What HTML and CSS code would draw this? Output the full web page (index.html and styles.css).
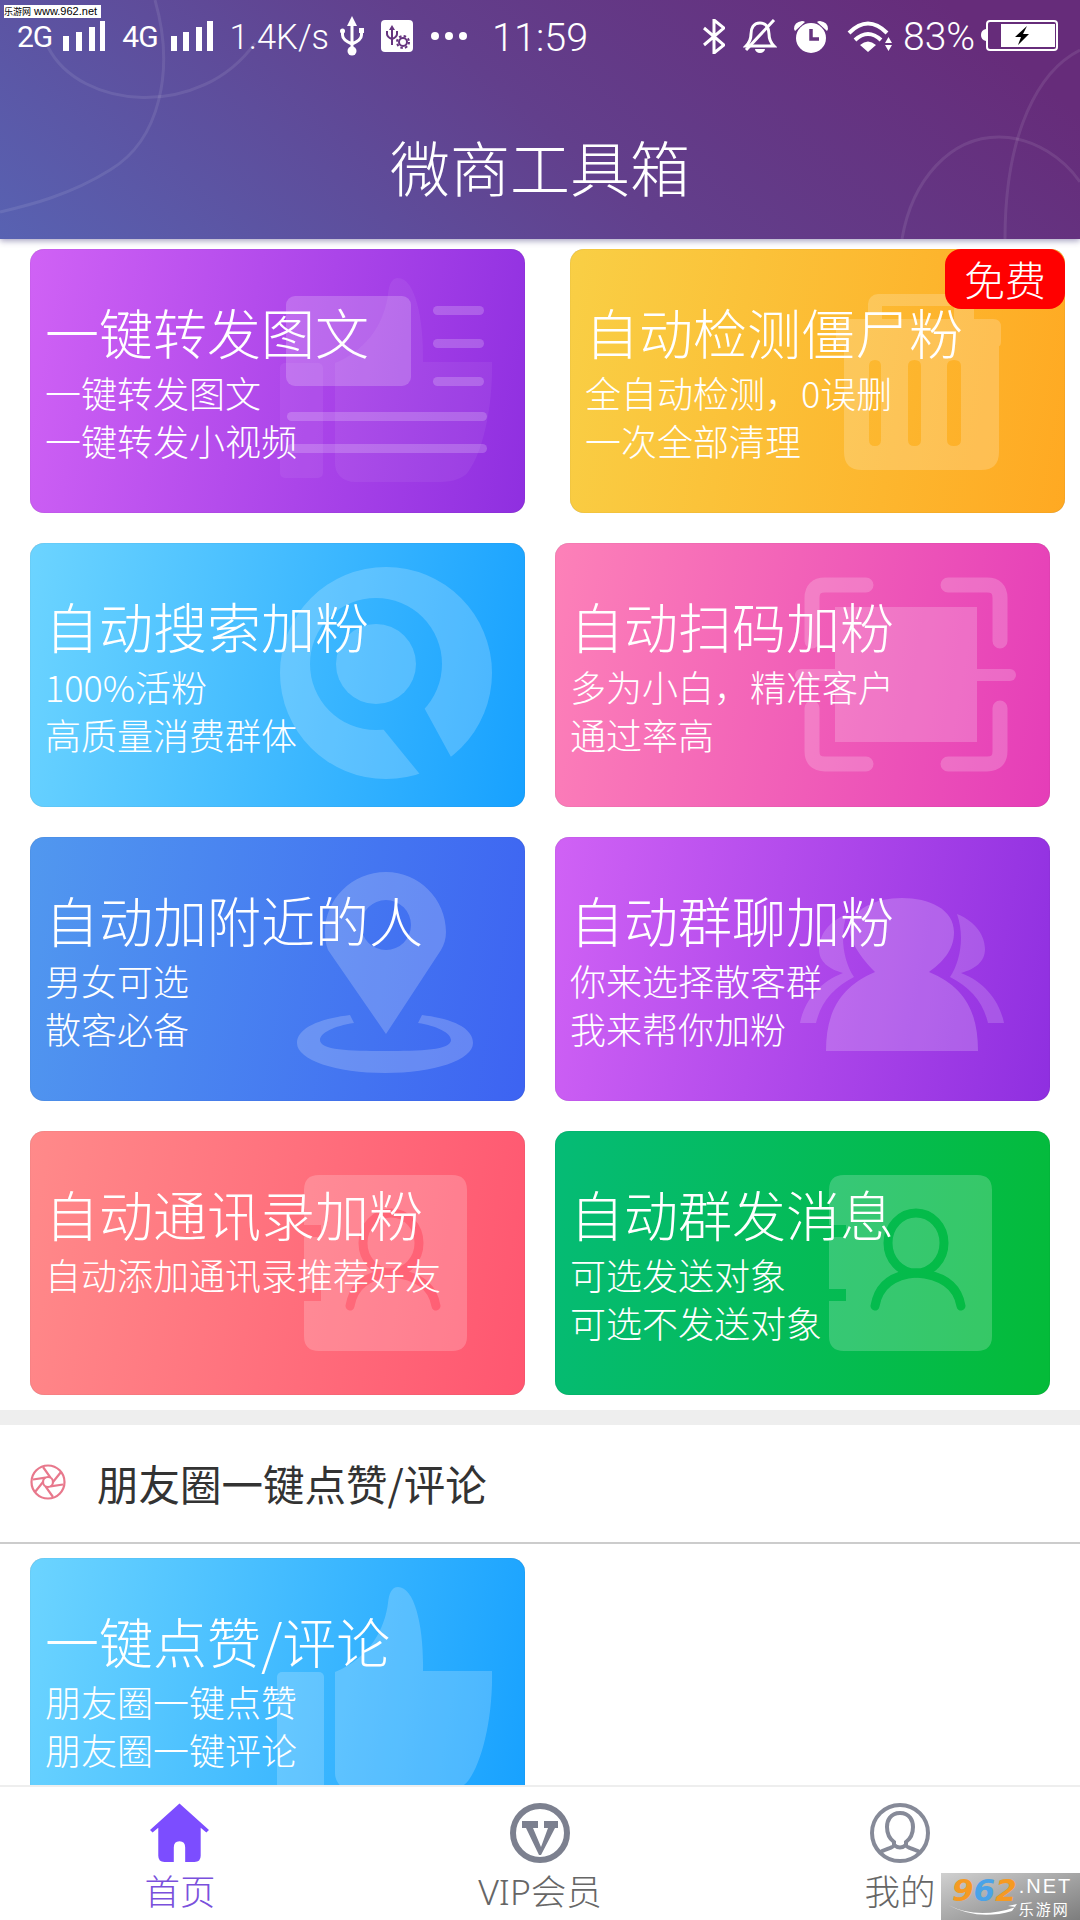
FILE: index.html
```html
<!DOCTYPE html>
<html lang="zh">
    <head>
        <meta charset="UTF-8">
        <meta name="viewport" content="width=device-width, initial-scale=1.0">
        <title>微商工具箱</title>
        <link rel="stylesheet" href="styles.css">
    </head>
    <body>
        <div class="page">

            <header class="header">
                <svg class="header-lines" viewBox="0 0 1080 239">
                    <path d="M48 47 C80 110 200 120 255 43"/>
                    <path d="M155 0 C175 70 160 140 110 170 C70 195 30 205 0 212"/>
                    <path d="M1080 50 C1040 70 1005 130 1005 239"/>
                    <path d="M902 239 C912 180 950 137 999 137 C1035 137 1065 160 1080 182"/>
                </svg>
                <div class="status-bar">
                    <span class="st-2g">2G</span>
                    <svg class="st-signal" viewBox="0 0 42 30"><path d="M0 15h6v15H0zM13 11h6v19h-6zM26 6h6v24h-6zM37 0h5v30h-5z"/></svg>
                    <span class="st-4g">4G</span>
                    <svg class="st-signal st-signal2" viewBox="0 0 42 30"><path d="M0 15h6v15H0zM12 11h6v19h-6zM25 6h6v24h-6zM36 0h6v30h-6z"/></svg>
                    <span class="st-speed">1.4K/s</span>
                    <svg class="st-usb" viewBox="0 0 24 40">
                        <path d="M12 0l5 10H7z"/>
                        <circle cx="12" cy="35" r="4.5"/>
                        <circle cx="2.5" cy="15" r="2.5"/>
                        <rect x="19" y="12" width="5" height="5"/>
                        <path class="st-line" d="M12 8v26M2.500 15v4q0 5 9.500 9M21.500 15v4q0 5-9.500 9"/>
                    </svg>
                    <svg class="st-debug" viewBox="0 0 32 32">
                        <rect width="32" height="32" rx="4"/>
                        <path class="st-glyph" d="M11 5l3 5H8z"/>
                        <path class="st-glyph-line" d="M11 8v17M6 11v3q0 3 5 5M16 11v3q0 3-5 5"/>
                        <circle class="st-gear" cx="22" cy="22" r="4"/>
                        <circle class="st-gear-teeth" cx="22" cy="22" r="6"/>
                    </svg>
                    <div class="st-dots"><i></i><i></i><i></i></div>
                    <span class="st-time">11:59</span>

                    <svg class="st-bt" viewBox="0 0 22 35"><path d="M1 9l20 17-10 8V1l10 8L1 26"/></svg>
                    <svg class="st-bell" viewBox="0 0 34 34">
                        <path class="st-line" d="M17 4C10 4 8 10 8 15c0 6-2 9-5 12h28c-3-3-5-6-5-12 0-5-2-11-9-11z"/>
                        <path d="M12 30h10a5 4 0 0 1-10 0z"/>
                        <path class="st-line" d="M3 31L31 1"/>
                    </svg>
                    <svg class="st-alarm" viewBox="0 0 36 33">
                        <circle cx="18" cy="18" r="15"/>
                        <path d="M1 9q0-7 8-8 2 0 3 1L2 11z M35 9q0-7-8-8-2 0-3 1l10 9z"/>
                        <path class="st-hand" d="M18 9v10h8"/>
                    </svg>
                    <svg class="st-wifi" viewBox="0 0 45 32">
                        <path class="st-line st-wifi-arc" d="M2 13Q21-6 40 13M8 20q13-12 26 0"/>
                        <path d="M13 25q8-7 16 0l-8 7zM41.500 17l3.500 6h-7zM38 25h7l-3.500 6z"/>
                    </svg>
                    <span class="st-batt-text">83%</span>
                    <svg class="st-battery" viewBox="0 0 78 32">
                        <path d="M5 9v12q-5-1-5-6t5-6z"/>
                        <rect class="st-line st-batt-body" x="6" y="1" width="70" height="29" rx="3"/>
                        <rect x="20" y="4" width="54" height="23"/>
                        <path class="st-bolt" d="M46 6L34 17h6l-3 8 11-11h-6l4-8z"/>
                    </svg>
                </div>
                <h1 class="header-title">微商工具箱</h1>
            </header>

            <main class="content">
                <div class="grid">

                    <div class="card purple">
                        <svg class="art" viewBox="0 0 495 264">
                            <g class="faint">
                                <path d="M305 114C340 100 355 70 358 45c1-10 4-16 10-16 17 0 26 41 25 84h69c1 47-10 92-24 110-4 6-15 10-28 10H325c-12 0-20-8-20-18z"/>
                                <rect x="250" y="114" width="43" height="115" rx="5"/>
                            </g>
                            <rect x="256" y="47" width="125" height="90" rx="9"/>
                            <rect x="403" y="57" width="51" height="9" rx="4.500"/>
                            <rect x="403" y="90" width="51" height="9" rx="4.500"/>
                            <rect x="403" y="128" width="51" height="9" rx="4.500"/>
                            <rect x="257" y="163" width="200" height="9" rx="4.500"/>
                            <rect x="257" y="195" width="200" height="9" rx="4.500"/>
                        </svg>
                        <h3 class="card-title">一键转发图文</h3>
                        <p class="card-sub">一键转发图文</p>
                        <p class="card-sub">一键转发小视频</p>
                    </div>

                    <div class="card yellow card-shift">
                        <svg class="art" viewBox="0 0 495 264">
                            <path fill-rule="evenodd" d="M298 45h96a10 10 0 0 1 10 10v15h19q8 0 8 8v14q0 5-2 5v106q0 18-18 18H292q-18 0-18-18V97q-8 0-8-5V78q0-8 8-8h24V55a10 10 0 0 1 10-10zm14 12v13h72V57zM299 117v74q0 6 6 6t6-6v-74q0-6-6-6t-6 6zm39 0v74q0 6 6.500 6t6.500-6v-74q0-6-6.500-6t-6.500 6zm39 0v74q0 6 7 6t7-6v-74q0-6-7-6t-7 6z"/>
                        </svg>
                        <span class="badge">免费</span>
                        <h3 class="card-title">自动检测僵尸粉</h3>
                        <p class="card-sub">全自动检测，0误删</p>
                        <p class="card-sub">一次全部清理</p>
                    </div>

                    <div class="card blue">
                        <svg class="art" viewBox="0 0 495 264">
                            <mask id="lensMask">
                                <circle cx="356" cy="130" r="106" fill="#fff"/>
                                <circle cx="346" cy="121" r="66" fill="#000"/>
                                <circle cx="346" cy="121" r="40" fill="#fff"/>
                                <path d="M349 181L391 159 421 214 397 240z" fill="#000"/>
                            </mask>
                            <rect x="240" y="20" width="240" height="230" mask="url(#lensMask)"/>
                        </svg>
                        <h3 class="card-title">自动搜索加粉</h3>
                        <p class="card-sub">100%活粉</p>
                        <p class="card-sub">高质量消费群体</p>
                    </div>

                    <div class="card pink">
                        <svg class="art" viewBox="0 0 495 264">
                            <path class="art-line" d="M311 42H270q-13 0-13 13v43M393 42h39q13 0 13 13v43M311 221H270q-13 0-13-13v-43M393 221h39q13 0 13-13v-43"/>
                            <rect x="240" y="126" width="221" height="12" rx="6"/>
                            <rect x="280" y="64" width="142" height="62"/>
                            <rect x="280" y="138" width="142" height="61"/>
                        </svg>
                        <h3 class="card-title">自动扫码加粉</h3>
                        <p class="card-sub">多为小白，精准客户</p>
                        <p class="card-sub">通过率高</p>
                    </div>

                    <div class="card indigo">
                        <svg class="art" viewBox="0 0 495 264">
                            <path fill-rule="evenodd" d="M356 35c33 0 60 27 60 60 0 7-2 13-5 18l-55 84-58-84c-2-5-3-11-3-18 0-33 27-60 61-60zm0 28a25 25 0 1 0 0 50 25 25 0 0 0 0-50z"/>
                            <path fill-rule="evenodd" d="M320 178l4 8c-20 3-34 10-34 17 0 10 29 11 65 11s66-1 66-11c0-7-14-14-33-17l4-8c33 4 51 14 51 28 0 17-39 30-88 30s-88-13-88-30c0-14 20-24 53-28z"/>
                        </svg>
                        <h3 class="card-title">自动加附近的人</h3>
                        <p class="card-sub">男女可选</p>
                        <p class="card-sub">散客必备</p>
                    </div>

                    <div class="card purple">
                        <svg class="art" viewBox="0 0 495 264">
                            <path d="M271 214c0-39 14-64 49-79-20-20-25-35-25-40 0-23 25-34 52-34s52 11 52 34c0 15-7 27-25 40 36 15 49 40 49 79z"/>
                            <path class="side" d="M402 77C422 85 430 100 430 112 430 125 420 132 406 136 430 145 445 165 449 186H433C428 165 415 150 395 140 405 125 410 100 402 77z"/>
                            <path class="side" d="M292 77C272 85 264 100 264 112 264 125 274 132 288 136 264 145 249 165 245 186H261C266 165 279 150 299 140 289 125 284 100 292 77z"/>
                        </svg>
                        <h3 class="card-title">自动群聊加粉</h3>
                        <p class="card-sub">你来选择散客群</p>
                        <p class="card-sub">我来帮你加粉</p>
                    </div>

                    <div class="card red">
                        <svg class="art" viewBox="0 0 495 264">
                            <mask id="bookMaskRed">
                                <path fill="#fff" d="M289 44h133q15 0 15 15v146q0 15-15 15H289q-15 0-15-15v-35h17v-12h-17v-52h17V94h-17V59q0-15 15-15z"/>
                                <ellipse cx="361" cy="112" rx="28" ry="30" fill="none" stroke="#000" stroke-width="9"/>
                                <path d="M320 175q5-30 41-33 40 3 45 33" fill="none" stroke="#000" stroke-width="9" stroke-linecap="round"/>
                            </mask>
                            <rect x="270" y="40" width="170" height="184" mask="url(#bookMaskRed)"/>
                        </svg>
                        <h3 class="card-title">自动通讯录加粉</h3>
                        <p class="card-sub">自动添加通讯录推荐好友</p>
                    </div>

                    <div class="card green">
                        <svg class="art" viewBox="0 0 495 264">
                            <mask id="bookMaskGreen">
                                <path fill="#fff" d="M289 44h133q15 0 15 15v146q0 15-15 15H289q-15 0-15-15v-35h17v-12h-17v-52h17V94h-17V59q0-15 15-15z"/>
                                <ellipse cx="361" cy="112" rx="28" ry="30" fill="none" stroke="#000" stroke-width="9"/>
                                <path d="M320 175q5-30 41-33 40 3 45 33" fill="none" stroke="#000" stroke-width="9" stroke-linecap="round"/>
                            </mask>
                            <rect x="270" y="40" width="170" height="184" mask="url(#bookMaskGreen)"/>
                        </svg>
                        <h3 class="card-title">自动群发消息</h3>
                        <p class="card-sub">可选发送对象</p>
                        <p class="card-sub">可选不发送对象</p>
                    </div>

                </div>

                <div class="strip"></div>

                <div class="section-head">
                    <svg class="aperture" viewBox="0 0 36 36">
                        <circle cx="18" cy="18" r="16.500"/>
                        <circle cx="18" cy="18" r="5"/>
                        <path d="M23 18L31 8M20.500 22.300L33 20.500M15.500 22.300L23 33M13 18L5 28M15.500 13.700L3 15.500M20.500 13.700L13 3"/>
                    </svg>
                    <span class="section-title">朋友圈一键点赞/评论</span>
                </div>

                <div class="grid-single">
                    <div class="card blue card-cut">
                        <svg class="art" viewBox="0 0 495 264">
                            <path d="M305 114C340 100 355 70 358 45c1-10 4-16 10-16 17 0 26 41 25 84h69c1 47-10 92-24 110-4 6-15 10-28 10H325c-12 0-20-8-20-18z"/>
                            <rect x="247" y="114" width="47" height="130" rx="5"/>
                        </svg>
                        <h3 class="card-title">一键点赞/评论</h3>
                        <p class="card-sub">朋友圈一键点赞</p>
                        <p class="card-sub">朋友圈一键评论</p>
                    </div>
                </div>
            </main>

            <nav class="tabbar">
                <div class="tab tab-active">
                    <svg class="tab-icon" viewBox="0 0 58 58">
                        <path d="M28.500 0.500L57 26l-2.500 2.500L49 24v27q0 6-6 6h-9V43q0-6-5.500-6T23 43v14h-9q-6 0-6-6V24l-5.500 4.500L0 26z" fill="#7c4dff"/>
                    </svg>
                    <span class="tab-label">首页</span>
                </div>
                <div class="tab">
                    <svg class="tab-icon" viewBox="0 0 60 60">
                        <circle cx="30" cy="30" r="27" fill="none" stroke="#7c808f" stroke-width="6"/>
                        <path d="M12 18h16v7h-5l8 19 7-19h-4v-7h14v7h-3L31 52h-2L16 25h-4z" fill="#7c808f"/>
                    </svg>
                    <span class="tab-label">VIP会员</span>
                </div>
                <div class="tab">
                    <svg class="tab-icon" viewBox="0 0 60 60">
                        <circle cx="30" cy="30" r="28" fill="none" stroke="#868a98" stroke-width="4"/>
                        <path d="M30 10c-10 0-13 8-13 14 0 7 3 12 7 15v3c0 3-10 4-15 8M30 10c10 0 13 8 13 14 0 7-3 12-7 15v3c0 3 10 4 15 8M24 42q6 5 12 0" fill="none" stroke="#868a98" stroke-width="4"/>
                    </svg>
                    <span class="tab-label">我的</span>
                </div>
            </nav>

            <div class="wm-top"><span class="wm-top-cn">乐游网</span> www.962.net</div>
            <div class="wm-logo">
                <div class="wm-nums"><span class="wm-o">9</span><span class="wm-b">6</span><span class="wm-o">2</span></div>
                <div class="wm-side">
                    <span class="wm-net">.NET</span>
                    <span class="wm-cn">乐游网</span>
                </div>
                <svg class="wm-swoosh" viewBox="0 0 70 12"><path d="M0 1Q30 16 68 3L60 2 69 0 64 7Q30 17 0 1z"/></svg>
            </div>

        </div>
    </body>
</html>
```

FILE: styles.css
```css
html, body {
    margin: 0;
    padding: 0;
}
body {
    font-family: "Noto Sans CJK SC", "Noto Sans", sans-serif;
    background-color: #fff;
}
h1, h3, p {
    margin: 0;
    font-weight: 300;
}
.page {
    position: relative;
    width: 1080px;
    height: 1920px;
    overflow: hidden;
    display: flex;
    flex-direction: column;
}

/* header */
.header {
    position: relative;
    z-index: 2;
    height: 239px;
    flex-shrink: 0;
    background: linear-gradient(40deg, #5862b2 0%, #623f8c 50%, #662c7a 90%);
    box-shadow: 0 2px 6px rgba(60, 50, 120, 0.45);
    color: #fff;
}
.header-lines {
    position: absolute;
    left: 0;
    top: 0;
    width: 1080px;
    height: 239px;
}
.header-lines path {
    fill: none;
    stroke: rgba(255, 255, 255, 0.09);
    stroke-width: 3;
}
.header-title {
    position: relative;
    margin-top: 64px;
    font-size: 60px;
    line-height: 60px;
    text-align: center;
}

/* status bar */
.status-bar {
    position: relative;
    height: 72px;
    display: flex;
    align-items: center;
    padding-left: 17px;
    font-family: Roboto, sans-serif;
    font-weight: 300;
}
.status-bar svg {
    fill: #fff;
    flex-shrink: 0;
}
.st-line {
    fill: none;
    stroke: #fff;
    stroke-width: 3;
}
.st-2g, .st-4g {
    font-size: 30px;
    font-weight: 400;
    letter-spacing: -1px;
}
.st-signal {
    width: 42px;
    height: 30px;
    margin-left: 11px;
}
.st-4g {
    margin-left: 17px;
}
.st-signal2 {
    margin-left: 13px;
}
.st-speed {
    margin-left: 17px;
    margin-top: 2px;
    font-size: 34.500px;
}
.st-usb {
    width: 24px;
    height: 40px;
    margin-left: 11px;
}
.st-debug {
    width: 32px;
    height: 32px;
    margin-left: 17px;
}
.st-glyph {
    fill: #65347f;
}
.st-glyph-line, .st-gear, .st-gear-teeth {
    fill: none;
    stroke: #65347f;
}
.st-glyph-line {
    stroke-width: 2;
}
.st-gear {
    stroke-width: 2;
}
.st-gear-teeth {
    stroke-width: 2;
    stroke-dasharray: 2.500 2.200;
}
.st-dots {
    display: flex;
    gap: 6px;
    margin-left: 18px;
}
.st-dots i {
    width: 8px;
    height: 8px;
    border-radius: 50%;
    background-color: #fff;
}
.st-time {
    margin-left: 25px;
    margin-top: 3px;
    font-size: 39.500px;
}
.st-bt {
    width: 22px;
    height: 35px;
    margin-left: 115px;
}
.st-bt path {
    fill: none;
    stroke: #fff;
    stroke-width: 3;
}
.st-bell {
    width: 34px;
    height: 34px;
    margin-left: 18px;
}
.st-alarm {
    width: 36px;
    height: 33px;
    margin-left: 16px;
}
.st-hand {
    fill: none;
    stroke: #65347f;
    stroke-width: 3.500;
}
.st-wifi {
    width: 45px;
    height: 32px;
    margin-left: 18px;
}
.st-wifi-arc {
    stroke-width: 4;
}
.st-batt-text {
    margin-left: 11px;
    margin-top: 2px;
    font-size: 39px;
}
.st-battery {
    width: 78px;
    height: 32px;
    margin-left: 6px;
}
.st-batt-body {
    stroke-width: 2;
}
.st-bolt {
    fill: #000;
}

/* cards */
.content {
    flex: 1;
    min-height: 0;
    overflow: hidden;
}
.grid {
    display: grid;
    grid-template-columns: 495px 495px;
    gap: 30px;
    padding: 10px 30px 15px;
}
.card {
    position: relative;
    width: 495px;
    height: 264px;
    box-sizing: border-box;
    padding: 53px 15px 0;
    border-radius: 14px;
    overflow: hidden;
    color: #fff;
    box-shadow: inset 0 0 1px rgba(0, 0, 0, 0.3);
}
.card-shift {
    margin-left: 15px;
    overflow: visible;
}
.purple { background: linear-gradient(100deg, #d062f5, #8f2fe0); }
.yellow { background: linear-gradient(100deg, #f9cf45, #ffa922); }
.blue { background: linear-gradient(100deg, #6cd4ff, #17a1ff); }
.pink { background: linear-gradient(100deg, #fd81b8, #e53db8); }
.indigo { background: linear-gradient(100deg, #5198ef, #3d63f2); }
.red { background: linear-gradient(100deg, #ff8a8a, #ff5670); }
.green { background: linear-gradient(100deg, #05bb76, #04bb38); }
.art {
    position: absolute;
    left: 0;
    top: 0;
    width: 495px;
    height: 264px;
    fill: rgba(255, 255, 255, 0.2);
}
.art .faint {
    fill: rgba(255, 255, 255, 0.06);
}
.art .side {
    fill: rgba(255, 255, 255, 0.17);
}
.art .art-line {
    fill: none;
    stroke: rgba(255, 255, 255, 0.2);
    stroke-width: 15;
    stroke-linecap: round;
}
.card-title {
    position: relative;
    font-size: 54px;
    line-height: 60px;
    margin-bottom: 6px;
    white-space: nowrap;
}
.card-sub {
    position: relative;
    font-size: 36px;
    line-height: 48px;
    white-space: nowrap;
}
.badge {
    position: absolute;
    right: 0;
    top: 0;
    width: 120px;
    height: 60px;
    background-color: #f00;
    border-radius: 16px;
    font-size: 41px;
    font-weight: 300;
    line-height: 58px;
    text-align: center;
}

/* section */
.strip {
    height: 15px;
    background-color: #eee;
}
.section-head {
    height: 117px;
    display: flex;
    align-items: center;
    padding-left: 30px;
    border-bottom: 2px solid #ccc;
}
.aperture {
    width: 36px;
    height: 36px;
    fill: none;
    stroke: #e8788c;
    stroke-width: 2.200;
    margin-top: -4px;
}
.section-title {
    margin-left: 31px;
    margin-top: -2px;
    font-size: 41.500px;
    color: #333;
}
.grid-single {
    padding: 14px 30px 0;
}

/* bottom tabs */
.tabbar {
    height: 133px;
    flex-shrink: 0;
    display: flex;
    background-color: #fff;
    border-top: 2px solid #eee;
}
.tab {
    width: 360px;
    display: flex;
    flex-direction: column;
    align-items: center;
    padding-top: 16px;
}
.tab-icon {
    width: 60px;
    height: 60px;
    display: block;
}
.tab-label {
    margin-top: 5px;
    font-family: "Noto Sans", "Noto Sans CJK SC", sans-serif;
    font-size: 35.500px;
    font-weight: 300;
    line-height: 46px;
    color: #666;
}
.tab-active .tab-label {
    color: #7a50dc;
}

/* watermarks */
.wm-top {
    position: absolute;
    z-index: 3;
    left: 4px;
    top: 5px;
    width: 97px;
    height: 13px;
    background-color: #fff;
    color: #000;
    font-family: "Liberation Sans", sans-serif;
    font-size: 11px;
    line-height: 13px;
    white-space: nowrap;
}
.wm-top-cn {
    font-family: "Noto Sans CJK SC", sans-serif;
    font-size: 9px;
}
.wm-logo {
    position: absolute;
    z-index: 3;
    right: 0;
    bottom: 0;
    width: 139px;
    height: 47px;
    display: flex;
    box-sizing: border-box;
    padding-left: 11px;
    background: linear-gradient(160deg, #d0d0d0, #7d7d7d);
}
.wm-nums {
    font-family: "DejaVu Sans", sans-serif;
    font-size: 31px;
    font-weight: 700;
    font-style: italic;
    line-height: 34px;
}
.wm-o {
    color: #f59a23;
}
.wm-b {
    color: #4aa3e8;
}
.wm-side {
    display: flex;
    flex-direction: column;
    margin-left: 2px;
    color: #fff;
    white-space: nowrap;
}
.wm-net {
    font-family: "Liberation Sans", sans-serif;
    font-size: 20px;
    line-height: 26px;
    letter-spacing: 2px;
}
.wm-cn {
    font-size: 15px;
    line-height: 20px;
    letter-spacing: 2px;
}
.wm-swoosh {
    position: absolute;
    left: 7px;
    bottom: 4px;
    width: 70px;
    height: 12px;
    fill: #fff;
}
```
